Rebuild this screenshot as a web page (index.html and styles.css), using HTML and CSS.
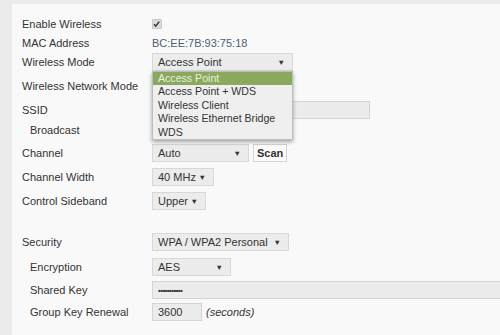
FILE: index.html
```html
<!DOCTYPE html>
<html>
<head>
<meta charset="utf-8">
<link rel="stylesheet" href="styles.css">
</head>
<body>
<div class="panel">
  <div class="row r1">
    <div class="label">Enable Wireless</div>
    <div class="field"><span class="check"><svg width="10" height="10" viewBox="0 0 10 10"><path d="M2.2 5.2 L4.2 7.4 L8 2.4" fill="none" stroke="#333" stroke-width="1.7"/></svg></span></div>
  </div>
  <div class="row r2">
    <div class="label">MAC Address</div>
    <div class="field"><span class="mac">BC:EE:7B:93:75:18</span></div>
  </div>
  <div class="row r3">
    <div class="label">Wireless Mode</div>
    <div class="field">
      <div class="select w-mode open"><span>Access Point</span><span class="arrow">▼</span>
        <ul class="menu">
          <li class="sel">Access Point</li>
          <li>Access Point + WDS</li>
          <li>Wireless Client</li>
          <li>Wireless Ethernet Bridge</li>
          <li>WDS</li>
        </ul>
      </div>
    </div>
  </div>
  <div class="row r4">
    <div class="label">Wireless Network Mode</div>
  </div>
  <div class="row r5">
    <div class="label">SSID</div>
    <div class="field"><div class="input w-ssid"></div></div>
  </div>
  <div class="row r6">
    <div class="label sub">Broadcast</div>
  </div>
  <div class="row r7">
    <div class="label">Channel</div>
    <div class="field"><div class="select w-chan"><span>Auto</span><span class="arrow">▼</span></div><div class="btn">Scan</div></div>
  </div>
  <div class="row r8">
    <div class="label">Channel Width</div>
    <div class="field"><div class="select w-width"><span>40 MHz</span><span class="arrow">▼</span></div></div>
  </div>
  <div class="row r9">
    <div class="label">Control Sideband</div>
    <div class="field"><div class="select w-side"><span>Upper</span><span class="arrow">▼</span></div></div>
  </div>
  <div class="row r10">
    <div class="label">Security</div>
    <div class="field"><div class="select w-sec"><span>WPA / WPA2 Personal</span><span class="arrow">▼</span></div></div>
  </div>
  <div class="row r11">
    <div class="label sub">Encryption</div>
    <div class="field"><div class="select w-enc"><span>AES</span><span class="arrow">▼</span></div></div>
  </div>
  <div class="row r12">
    <div class="label sub">Shared Key</div>
    <div class="field key-field"><div class="input w-key"><span class="dots">•••••••••••</span></div></div>
  </div>
  <div class="row r13">
    <div class="label sub">Group Key Renewal</div>
    <div class="field"><div class="input w-renew">3600</div><span class="unit">(seconds)</span></div>
  </div>
</div>
</body>
</html>
```
FILE: styles.css
```css
html, body {
  margin: 0;
  padding: 0;
  width: 500px;
  height: 335px;
  overflow: hidden;
  background: #ebebeb;
}
body {
  font-family: "Liberation Sans", Arial, sans-serif;
  font-size: 11px;
  color: #333;
}
.panel {
  margin: 4px 0 0 12px;
  height: 331px;
  background: #f9f9f9;
  padding: 10px 0 0 10px;
  box-sizing: border-box;
  overflow: hidden;
}
.row {
  display: flex;
  align-items: center;
  height: 20px;
}
.r1, .r2 { height: 19px; }
.r4 { height: 28px; }
.r7 { margin-top: 3px; }
.r8, .r9 { margin-top: 4px; }
.r10 { margin-top: 21px; }
.r11 { margin-top: 5px; }
.r12 { margin-top: 3px; }
.r13 { margin-top: 2px; }
.label {
  width: 130px;
  flex: none;
}
.label.sub { padding-left: 8px; box-sizing: border-box; }
.field {
  display: flex;
  align-items: center;
  gap: 4px;
  position: relative;
}
.key-field { flex: 1; min-width: 0; }
.check {
  width: 10px;
  height: 10px;
  background: #dcdcdc;
  border: 1px solid #c8c8c8;
  border-radius: 1px;
  display: flex;
  box-sizing: border-box;
}
.check svg { margin: -1px 0 0 -1px; }
.mac { color: #4e5d72; }
.select {
  position: relative;
  height: 18px;
  box-sizing: border-box;
  border: 1px solid #d8d8d8;
  background: #ececec;
  display: flex;
  align-items: center;
  justify-content: space-between;
  padding: 0 7px 0 5px;
  color: #333;
}
.arrow { font-size: 7.5px; color: #333; }
.w-mode { width: 141px; }
.w-chan { width: 97px; }
.w-width { width: 62px; }
.w-side { width: 54px; }
.w-sec { width: 137px; }
.w-enc { width: 79px; }
.menu {
  position: absolute;
  left: 0;
  top: 17px;
  width: 141px;
  margin: 0 0 0 -1px;
  padding: 0;
  list-style: none;
  background: #efefef;
  border: 1px solid #bdbdbd;
  box-shadow: 0 2px 4px rgba(0,0,0,0.35);
  box-sizing: border-box;
  z-index: 5;
}
.menu li {
  height: 13.4px;
  line-height: 13.4px;
  padding-left: 5px;
  color: #333;
  font-size: 10.6px;
}
.menu li.sel {
  background: #8aa95c;
  color: #e9f1df;
}
.input {
  height: 18px;
  box-sizing: border-box;
  border: 1px solid #d4d4d4;
  background: #ececec;
  display: flex;
  align-items: center;
  padding-left: 5px;
}
.w-ssid { width: 218px; }
.w-key { width: 400px; flex: none; }
.w-renew { width: 50px; }
.dots { font-size: 8px; letter-spacing: -0.6px; font-weight: bold; }
.btn {
  height: 18px;
  box-sizing: border-box;
  border: 1px solid #d4d4d4;
  background: #fbfbfb;
  font-weight: bold;
  padding: 0 3px;
  display: flex;
  align-items: center;
  color: #333;
}
.unit { font-style: italic; }
```
